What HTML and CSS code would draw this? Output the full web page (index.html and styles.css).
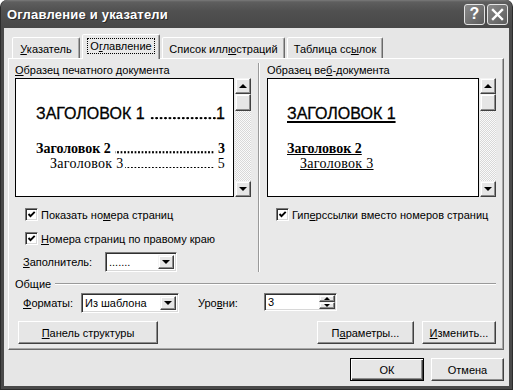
FILE: index.html
```html
<!DOCTYPE html>
<html lang="ru">
<head>
<meta charset="utf-8">
<title>Оглавление и указатели</title>
<link rel="stylesheet" href="styles.css">
</head>
<body>
<div class="window">
  <div class="titlebar">
    <span class="title">Оглавление и указатели</span>
    <div class="tb-buttons">
      <span class="tb-btn help">?</span>
      <span class="tb-btn close"><svg width="13" height="13" viewBox="0 0 13 13"><path d="M2 2 L11 11 M11 2 L2 11" stroke="#fff" stroke-width="2.4" stroke-linecap="square"/></svg></span>
    </div>
  </div>
  <div class="client">
    <div class="tabs">
      <div class="tab t1"><span><u>У</u>казатель</span></div>
      <div class="tab t2 active"><span class="focus">О<u>г</u>лавление</span></div>
      <div class="tab t3"><span>Список илл<u>ю</u>страций</span></div>
      <div class="tab t4"><span>Таблица сс<u>ы</u>лок</span></div>
    </div>
    <div class="panel">
      <div class="columns">
        <div class="col col-left">
          <div class="label"><u>О</u>бразец печатного документа</div>
          <div class="preview-row">
            <div class="preview print">
              <div class="toc-line h1"><span class="txt">ЗАГОЛОВОК 1</span><span class="leader"></span><span class="num">1</span></div>
              <div class="toc-line h2"><span class="txt">Заголовок 2</span><span class="leader"></span><span class="num">3</span></div>
              <div class="toc-line h3"><span class="txt">Заголовок 3</span><span class="leader"></span><span class="num">5</span></div>
            </div>
            <div class="vscroll">
              <div class="sbtn"><span class="arrow up"></span></div>
              <div class="thumb"></div>
              <div class="track"></div>
              <div class="sbtn"><span class="arrow down"></span></div>
            </div>
          </div>
          <div class="check c1">
            <span class="box"><svg width="9" height="9" viewBox="0 0 9 9"><path d="M1.5 4 L3.5 6.2 L7.7 1.8" fill="none" stroke="#000" stroke-width="1.9"/></svg></span>
            <span>Показать но<u>м</u>ера страниц</span>
          </div>
          <div class="check c2">
            <span class="box"><svg width="9" height="9" viewBox="0 0 9 9"><path d="M1.5 4 L3.5 6.2 L7.7 1.8" fill="none" stroke="#000" stroke-width="1.9"/></svg></span>
            <span><u>Н</u>омера страниц по правому краю</span>
          </div>
          <div class="field-row filler">
            <span class="flabel"><u>З</u>аполнитель:</span>
            <div class="combo w-filler">
              <span class="cval">.......</span>
              <span class="cbtn"><span class="arrow down"></span></span>
            </div>
          </div>
        </div>
        <div class="vsep"></div>
        <div class="col col-right">
          <div class="label">Образец ве<u>б</u>-документа</div>
          <div class="preview-row">
            <div class="preview web">
              <div class="web-line w1">ЗАГОЛОВОК 1</div>
              <div class="web-line w2">Заголовок 2</div>
              <div class="web-line w3">Заголовок 3</div>
            </div>
            <div class="vscroll">
              <div class="sbtn"><span class="arrow up"></span></div>
              <div class="thumb"></div>
              <div class="track"></div>
              <div class="sbtn"><span class="arrow down"></span></div>
            </div>
          </div>
          <div class="check c1 c-right">
            <span class="box"><svg width="9" height="9" viewBox="0 0 9 9"><path d="M1.5 4 L3.5 6.2 L7.7 1.8" fill="none" stroke="#000" stroke-width="1.9"/></svg></span>
            <span>Гип<u>е</u>рссылки вместо номеров страниц</span>
          </div>
        </div>
      </div>
      <div class="group-head"><span>Общие</span><span class="hline"></span></div>
      <div class="field-row formats">
        <span class="flabel fmt-label"><u>Ф</u>орматы:</span>
        <div class="combo w-formats">
          <span class="cval">Из шаблона</span>
          <span class="cbtn"><span class="arrow down"></span></span>
        </div>
        <span class="flabel lvl-label">Уро<u>в</u>ни:</span>
        <div class="spin">
          <span class="cval">3</span>
          <span class="spin-btns">
            <span class="spbtn"><span class="arrow up small"></span></span>
            <span class="spbtn"><span class="arrow down small"></span></span>
          </span>
        </div>
      </div>
      <div class="button-row">
        <button class="btn b-outline"><u>П</u>анель структуры</button>
        <span class="spacer"></span>
        <button class="btn b-params">П<u>а</u>раметры...</button>
        <button class="btn b-modify"><u>И</u>зменить...</button>
      </div>
    </div>
    <div class="footer">
      <button class="btn b-ok default">ОК</button>
      <button class="btn b-cancel">Отмена</button>
    </div>
  </div>
</div>
</body>
</html>
```

FILE: styles.css
```css
* { box-sizing: border-box; }
html, body { margin: 0; padding: 0; }
body {
  width: 513px;
  height: 390px;
  overflow: hidden;
  background: #fff;
  font-family: "Liberation Sans", Arial, sans-serif;
  font-size: 11px;
  color: #000;
}
u { text-decoration: underline; text-underline-offset: 1px; }

.window {
  width: 513px;
  height: 390px;
  background: #4a4a4a;
  border: 1px solid #2c2c2c;
  border-top: none;
  border-radius: 7px 7px 0 0;
  display: flex;
  flex-direction: column;
}

.titlebar {
  height: 28px;
  flex: none;
  display: flex;
  align-items: center;
  padding: 0 4px 0 6px;
  background: linear-gradient(#7a7a7a 0, #5e5e5e 2px, #505050 40%, #484848 100%);
  border-radius: 7px 7px 0 0;
  color: #fff;
}
.title {
  flex: 1;
  font-weight: bold;
  font-size: 13px;
  letter-spacing: 0.2px;
  text-shadow: 1px 1px 0 #2a2a2a;
}
.tb-buttons { display: flex; gap: 2px; }
.tb-btn {
  width: 21px;
  height: 21px;
  border: 1px solid #e4e4e4;
  border-radius: 3px;
  background: linear-gradient(135deg, #8a8a8a, #5c5c5c);
  display: flex;
  align-items: center;
  justify-content: center;
  color: #fff;
  font-weight: bold;
  font-size: 16px;
  font-family: "Liberation Sans", Arial, sans-serif;
}

.client {
  flex: 1;
  margin: 0 3px 3px;
  background: #e6e6e6;
  padding: 6px 5px 0 4px;
  display: flex;
  flex-direction: column;
}

.tabs {
  display: flex;
  align-items: flex-end;
  gap: 2px;
  height: 25px;
  margin-bottom: -1px;
  padding-left: 4px;
  position: relative;
  z-index: 1;
}
.tab {
  height: 21px;
  margin-bottom: 1px;
  border: 1px solid;
  border-bottom: none;
  border-color: #fff #6a6a6a transparent #fff;
  border-radius: 2px 2px 0 0;
  box-shadow: inset -1px 0 0 #a8a8a8;
  background: #e6e6e6;
  display: flex;
  align-items: center;
  justify-content: center;
  padding-top: 1px;
}
.tab.active {
  height: 25px;
  margin-bottom: 0;
  background: #e9e9e9;
  padding-top: 0;
  padding-bottom: 2px;
}
.t1 { width: 68px; }
.t2 { width: 78px; }
.t3 { width: 123px; }
.t4 { width: 96px; }
.focus { outline: 1px dotted #000; outline-offset: 1px; padding: 0 1px; }

.panel {
  height: 292px;
  background: #e9e9e9;
  border: 1px solid;
  border-color: #fff #6a6a6a #6a6a6a #fff;
  box-shadow: inset -1px -1px 0 #a8a8a8;
  padding: 4px 7px 0 6px;
  display: flex;
  flex-direction: column;
}

.columns { display: flex; }
.col { display: flex; flex-direction: column; }
.col-left { width: 236px; }
.col-right { width: 229px; }
.vsep {
  width: 2px;
  margin: 0 7px;
  border-left: 1px solid #9a9a9a;
  border-right: 1px solid #fff;
}
.label { height: 15px; line-height: 14px; white-space: nowrap; }

.preview-row { display: flex; height: 119px; }
.preview {
  flex: 1;
  background: #fff;
  border: 1px solid #000;
  overflow: hidden;
}
.vscroll {
  width: 16px;
  margin-left: 1px;
  display: flex;
  flex-direction: column;
}
.sbtn, .thumb, .cbtn, .spbtn {
  background: #e6e6e6;
  border: 1px solid;
  border-color: #f4f4f4 #404040 #404040 #f4f4f4;
  box-shadow: inset -1px -1px 0 #8c8c8c, inset 1px 1px 0 #fff;
  display: flex;
  align-items: center;
  justify-content: center;
}
.sbtn { height: 16px; flex: none; }
.thumb { height: 17px; flex: none; }
.track {
  flex: 1;
  background: repeating-conic-gradient(#fafafa 0 25%, #d8d8d8 0 50%) 0 0 / 2px 2px;
}
.arrow {
  width: 0;
  height: 0;
  border-left: 4px solid transparent;
  border-right: 4px solid transparent;
}
.arrow.up { border-bottom: 4px solid #000; }
.arrow.down { border-top: 4px solid #000; }
.arrow.small { border-left-width: 3px; border-right-width: 3px; }
.arrow.up.small { border-bottom-width: 3px; }
.arrow.down.small { border-top-width: 3px; }

/* print preview */
.print { padding: 26px 8px 0 20px; }
.toc-line { display: flex; white-space: nowrap; }
.toc-line .leader { flex: 1; background-repeat: repeat-x; }
.h1 {
  font-family: "Liberation Sans", Arial, sans-serif;
  font-size: 16px;
  line-height: 18px;
  -webkit-text-stroke: 0.3px #000;
}
.h1 .leader {
  margin-left: 5px;
  background-image: radial-gradient(circle at 50% 13.2px, #000 1.05px, transparent 1.4px);
  background-size: 4.45px 18px;
  background-position: right top;
}
.h2 {
  font-family: "Liberation Serif", "Times New Roman", serif;
  font-weight: bold;
  font-size: 14px;
  line-height: 15px;
  margin-top: 18px;
}
.h2 .leader {
  margin: 0 4px 0 4px;
  background-image: radial-gradient(circle at 50% 11.4px, #000 0.95px, transparent 1.3px);
  background-size: 3.5px 15px;
  background-position: right top;
}
.h3 {
  font-family: "Liberation Serif", "Times New Roman", serif;
  font-size: 14px;
  line-height: 15px;
  padding-left: 14px;
  letter-spacing: 0.3px;
}
.h3 .leader {
  margin: 0 4px 0 1px;
  background-image: radial-gradient(circle at 50% 11.6px, #000 0.6px, transparent 1px);
  background-size: 3.5px 15px;
  background-position: right top;
}

/* web preview */
.web { padding: 26px 0 0 19px; }
.web-line { text-decoration: underline; white-space: nowrap; }
.w1 {
  font-family: "Liberation Sans", Arial, sans-serif;
  font-size: 16px;
  line-height: 18px;
  -webkit-text-stroke: 0.3px #000;
  text-decoration-thickness: 2px;
  text-underline-offset: 2px;
}
.w2 {
  font-family: "Liberation Serif", "Times New Roman", serif;
  font-weight: bold;
  font-size: 14px;
  line-height: 15px;
  margin-top: 18px;
}
.w3 {
  font-family: "Liberation Serif", "Times New Roman", serif;
  font-size: 14px;
  line-height: 15px;
  padding-left: 13px;
  letter-spacing: 0.3px;
}

/* checkboxes */
.check {
  display: flex;
  align-items: center;
  gap: 3px;
  height: 13px;
  padding-left: 10px;
  white-space: nowrap;
}
.c1 { margin-top: 11px; }
.c2 { margin-top: 11px; }
.c-right { padding-left: 9px; }
.box {
  width: 13px;
  height: 13px;
  flex: none;
  background: #fff;
  border: 1px solid;
  border-color: #7a7a7a #fff #fff #7a7a7a;
  box-shadow: inset 1px 1px 0 #303030, inset -1px -1px 0 #d8d8d8;
  display: flex;
  align-items: center;
  justify-content: center;
}

/* fields */
.field-row { display: flex; align-items: center; }
.filler { margin-top: 7px; height: 20px; padding-left: 8px; }
.filler .flabel { width: 82px; }
.combo, .spin {
  display: flex;
  align-items: stretch;
  background: #fff;
  border: 1px solid;
  border-color: #7a7a7a #fff #fff #7a7a7a;
  box-shadow: inset 1px 1px 0 #303030, inset -1px -1px 0 #d8d8d8;
  padding: 2px;
}
.cval { flex: 1; display: flex; align-items: center; padding-left: 1px; white-space: nowrap; }
.cbtn { width: 16px; flex: none; }
.w-filler { width: 72px; height: 20px; }
.w-formats { width: 98px; height: 20px; }

.group-head {
  display: flex;
  align-items: center;
  height: 14px;
  margin-top: 5px;
}
.hline {
  flex: 1;
  height: 2px;
  margin-left: 4px;
  border-top: 1px solid #9a9a9a;
  border-bottom: 1px solid #fff;
}

.formats { margin-top: 2px; height: 20px; padding-left: 8px; align-items: flex-start; }
.formats .flabel { height: 20px; display: flex; align-items: center; }
.fmt-label { width: 58px; }
.lvl-label { width: 66px; margin-left: 19px; }
.spin { width: 73px; height: 18px; padding: 1px 1px 1px 2px; }
.spin-btns { display: flex; flex-direction: column; width: 16px; flex: none; }
.spbtn { flex: 1; }

.button-row { display: flex; margin-top: 8px; height: 23px; gap: 8px; }
.spacer { flex: 1; }
.btn {
  font-family: "Liberation Sans", Arial, sans-serif;
  font-size: 11px;
  color: #000;
  height: 23px;
  padding: 0;
  background: #e6e6e6;
  border: 1px solid;
  border-color: #fff #404040 #404040 #fff;
  box-shadow: inset -1px -1px 0 #8c8c8c;
}
.b-outline { width: 140px; margin-left: 3px; }
.b-params { width: 97px; }
.b-modify { width: 74px; }

.footer { display: flex; justify-content: flex-end; gap: 7px; margin-top: 8px; }
.b-ok { width: 74px; }
.b-cancel { width: 73px; }
.btn.default {
  border: 1px solid #000;
  box-shadow: inset 1px 1px 0 #fff, inset -1px -1px 0 #404040, inset -2px -2px 0 #8c8c8c;
}
```
